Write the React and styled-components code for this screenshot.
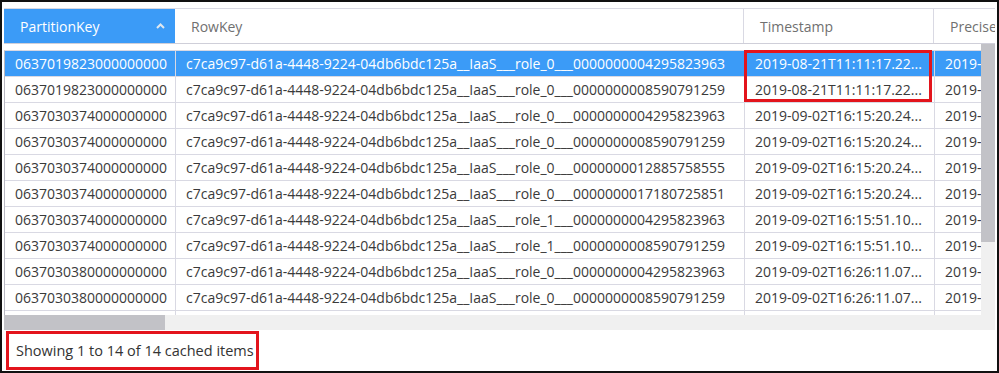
import styled, { createGlobalStyle } from 'styled-components';

const GlobalStyle = createGlobalStyle`
  html, body {
    margin: 0;
    padding: 0;
    background: #fff;
  }
  body {
    font-family: "Open Sans", "Noto Sans", sans-serif;
  }
`;

const BLUE = '#3b9bf7';
const LINE = '#d9d9e3';
const RED = '#e3141c';

const columns = [
  { key: 'pk', title: 'PartitionKey', width: 171, sorted: true },
  { key: 'rk', title: 'RowKey', width: 569 },
  { key: 'ts', title: 'Timestamp', width: 190 },
  { key: 'pt', title: 'PreciseTimeStamp', width: 200 },
];

const rk = (role, id) =>
  `c7ca9c97-d61a-4448-9224-04db6bdc125a__IaaS___role_${role}___${id}`;

const rows = [
  { pk: '0637019823000000000', rk: rk(0, '0000000004295823963'), ts: '2019-08-21T11:11:17.22...', pt: '2019-08-21T11:11:17.2247413Z' },
  { pk: '0637019823000000000', rk: rk(0, '0000000008590791259'), ts: '2019-08-21T11:11:17.22...', pt: '2019-08-21T11:11:17.2247413Z' },
  { pk: '0637030374000000000', rk: rk(0, '0000000004295823963'), ts: '2019-09-02T16:15:20.24...', pt: '2019-09-02T16:15:20.2467811Z' },
  { pk: '0637030374000000000', rk: rk(0, '0000000008590791259'), ts: '2019-09-02T16:15:20.24...', pt: '2019-09-02T16:15:20.2467811Z' },
  { pk: '0637030374000000000', rk: rk(0, '0000000012885758555'), ts: '2019-09-02T16:15:20.24...', pt: '2019-09-02T16:15:20.2467811Z' },
  { pk: '0637030374000000000', rk: rk(0, '0000000017180725851'), ts: '2019-09-02T16:15:20.24...', pt: '2019-09-02T16:15:20.2467811Z' },
  { pk: '0637030374000000000', rk: rk(1, '0000000004295823963'), ts: '2019-09-02T16:15:51.10...', pt: '2019-09-02T16:15:51.1012876Z' },
  { pk: '0637030374000000000', rk: rk(1, '0000000008590791259'), ts: '2019-09-02T16:15:51.10...', pt: '2019-09-02T16:15:51.1012876Z' },
  { pk: '0637030380000000000', rk: rk(0, '0000000004295823963'), ts: '2019-09-02T16:26:11.07...', pt: '2019-09-02T16:26:11.0735118Z' },
  { pk: '0637030380000000000', rk: rk(0, '0000000008590791259'), ts: '2019-09-02T16:26:11.07...', pt: '2019-09-02T16:26:11.0735118Z' },
  { pk: '0637030380000000000', rk: rk(1, '0000000012885758555'), ts: '2019-09-02T16:26:11.07...', pt: '2019-09-02T16:26:11.0735118Z' },
];

const Frame = styled.div`
  box-sizing: border-box;
  width: 999px;
  height: 373px;
  border: 2px solid #111;
  display: flex;
  flex-direction: column;
  overflow: hidden;
`;

const Grid = styled.div`
  position: relative;
  margin: 6px 2px 0 2px;
  display: flex;
  flex-direction: column;
`;

const HeaderRow = styled.div`
  display: flex;
  height: 34px;
  border-top: 1px solid ${LINE};
  border-bottom: 1px solid #cfcfd9;
  overflow: hidden;
`;

const HeaderCell = styled.div`
  box-sizing: border-box;
  flex: 0 0 ${(p) => p.$width}px;
  display: flex;
  align-items: center;
  justify-content: space-between;
  padding: 0 9px 0 16px;
  border-right: 1px solid ${(p) => (p.$active ? BLUE : LINE)};
  background: ${(p) => (p.$active ? BLUE : '#fff')};
  color: ${(p) => (p.$active ? '#fff' : '#707070')};
  font-size: 14px;
  white-space: nowrap;
`;

const Caret = styled.svg`
  width: 9px;
  height: 6px;
  flex: none;
`;

const Body = styled.div`
  display: flex;
  height: 271px;
`;

const BodyMain = styled.div`
  flex: 1;
  min-width: 0;
  padding-top: 6px;
  display: flex;
  flex-direction: column;
`;

const Viewport = styled.div`
  flex: 1;
  border-top: 1px solid ${LINE};
  border-left: 1px solid #b8b8c2;
  overflow: hidden;
`;

const Row = styled.div`
  display: flex;
  height: 25px;
  border-bottom: 1px solid ${LINE};
  background: ${(p) => (p.$selected ? BLUE : '#fff')};
  color: ${(p) => (p.$selected ? '#fff' : '#3a3a3a')};
`;

const Cell = styled.div`
  box-sizing: border-box;
  flex: 0 0 ${(p) => p.$width}px;
  display: flex;
  align-items: center;
  padding: 0 10px;
  border-right: 1px solid ${LINE};
  font-size: 14px;
  white-space: nowrap;
  overflow: hidden;
`;

const VScroll = styled.div`
  width: 14px;
  background: #f0f0f0;
  display: flex;
  flex-direction: column;
`;

const VThumb = styled.div`
  height: 198px;
  background: #c2c2c7;
`;

const HScroll = styled.div`
  height: 15px;
  margin-right: 0;
  background: #f0f0f0;
  display: flex;
`;

const HThumb = styled.div`
  width: 161px;
  background: #c2c2c7;
`;

const Highlight = styled.div`
  position: absolute;
  left: 740px;
  top: 42px;
  width: 188px;
  height: 52px;
  box-sizing: border-box;
  border: 3px solid ${RED};
  pointer-events: none;
`;

const Footer = styled.div`
  flex: 1;
  display: flex;
  align-items: flex-start;
  padding: 1px 0 0 4px;
`;

const Status = styled.div`
  box-sizing: border-box;
  height: 39px;
  width: 253px;
  border: 3px solid ${RED};
  display: flex;
  align-items: center;
  padding-left: 7px;
  font-size: 14.5px;
  color: #333;
  white-space: nowrap;
`;

export default function App() {
  return (
    <>
      <GlobalStyle />
      <Frame>
        <Grid>
          <HeaderRow>
            {columns.map((c) => (
              <HeaderCell key={c.key} $width={c.width} $active={c.sorted}>
                <span>{c.title}</span>
                {c.sorted && (
                  <Caret viewBox="0 0 9 6">
                    <path d="M1 5 L4.5 1.5 L8 5" fill="none" stroke="#dfe7ef" strokeWidth="2" />
                  </Caret>
                )}
              </HeaderCell>
            ))}
          </HeaderRow>
          <Body>
            <BodyMain>
              <Viewport>
                {rows.map((r, i) => (
                  <Row key={i} $selected={i === 0}>
                    {columns.map((c) => (
                      <Cell key={c.key} $width={c.width}>{r[c.key]}</Cell>
                    ))}
                  </Row>
                ))}
              </Viewport>
            </BodyMain>
            <VScroll>
              <VThumb />
            </VScroll>
          </Body>
          <HScroll>
            <HThumb />
          </HScroll>
          <Highlight />
        </Grid>
        <Footer>
          <Status>Showing 1 to 14 of 14 cached items</Status>
        </Footer>
      </Frame>
    </>
  );
}
